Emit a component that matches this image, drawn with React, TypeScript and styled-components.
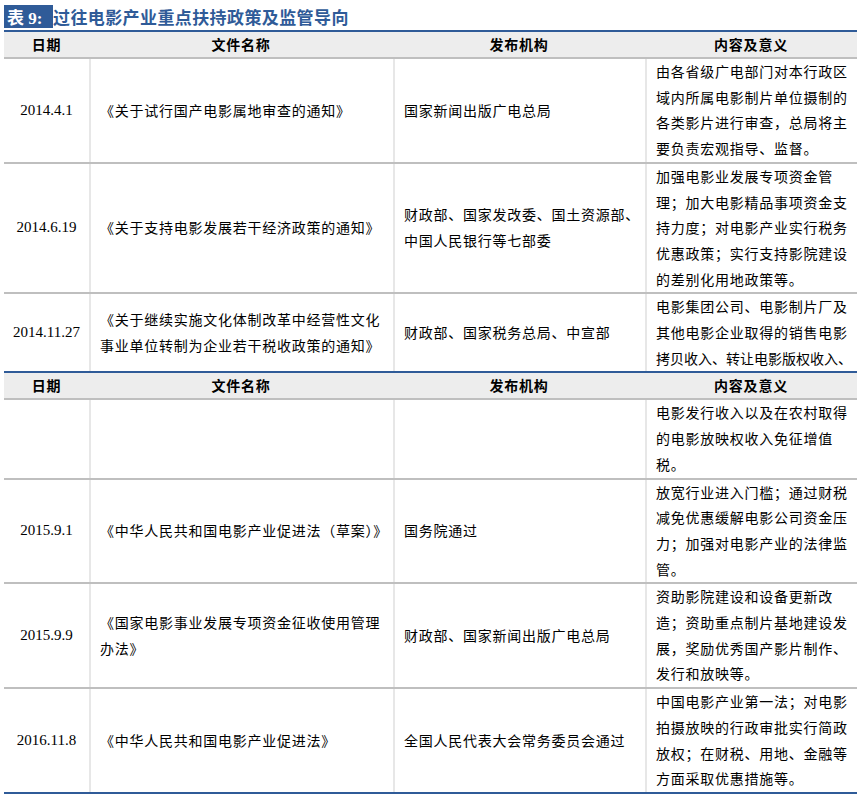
import React from "react";
import styled, { createGlobalStyle } from "styled-components";

const Global = createGlobalStyle`
  html, body { margin: 0; padding: 0; background: #ffffff; }
  body { font-family: "Noto Sans CJK SC", sans-serif; color: #000; }
`;

const BLUE = "#2f5b98";

const Page = styled.div`
  width: 861px;
  padding: 5px 4px 0 4px;
  box-sizing: border-box;
`;

const TitleBar = styled.div`
  display: flex;
  align-items: center;
  height: 23px;
  margin-bottom: 2px;
`;

const TitleLabel = styled.span`
  display: flex;
  align-items: center;
  height: 23px;
  width: 49px;
  box-sizing: border-box;
  padding-left: 3px;
  background: ${BLUE};
  color: #fff;
  font-family: "Liberation Serif", "Noto Sans CJK SC", serif;
  font-weight: 700;
  font-size: 17px;
  white-space: pre;
`;

const TitleText = styled.span`
  color: ${BLUE};
  font-family: "Noto Sans CJK SC", sans-serif;
  font-weight: 700;
  font-size: 17px;
  letter-spacing: 0.4px;
  line-height: 23px;
`;

const Section = styled.div<{ $closed?: boolean }>`
  border-top: 2px solid ${BLUE};
  border-bottom: ${(p) => (p.$closed ? `2px solid ${BLUE}` : "none")};
  width: 853px;
`;

const Row = styled.div<{ $last?: boolean }>`
  display: grid;
  grid-template-columns: 85px 304px 252px 212px;
  border-bottom: ${(p) => (p.$last ? "none" : "2px solid #bfbfbf")};
`;

const HeadRow = styled(Row)`
  background: #ededed;
  height: 25px;
  box-sizing: content-box;
`;

const HeadCell = styled.div`
  display: flex;
  align-items: center;
  justify-content: center;
  font-weight: 700;
  font-size: 14px;
  letter-spacing: 0.8px;
  line-height: 25px;
`;

const Cell = styled.div<{ $divider?: boolean; $top?: boolean; $center?: boolean }>`
  display: flex;
  flex-direction: column;
  justify-content: ${(p) => (p.$top ? "flex-start" : "center")};
  align-items: ${(p) => (p.$center ? "center" : "flex-start")};
  border-left: ${(p) => (p.$divider ? "2px solid #e7e7e7" : "none")};
  padding: 0 0 0 ${(p) => (p.$center ? "0" : "9px")};
  box-sizing: border-box;
  font-size: 14px;
  letter-spacing: 0.75px;
  line-height: 25.7px;
`;

const DateText = styled.span`
  font-family: "Liberation Serif", serif;
  font-size: 15px;
  letter-spacing: 0;
`;

const Line = styled.span<{ $tight?: boolean }>`
  display: block;
  white-space: nowrap;
  letter-spacing: ${(p) => (p.$tight ? "0px" : "0.75px")};
`;

type Item = {
  date: string;
  name: string[];
  org: string[];
  content: string[];
  tightLast?: boolean;
};

const part1: Item[] = [
  {
    date: "2014.4.1",
    name: ["《关于试行国产电影属地审查的通知》"],
    org: ["国家新闻出版广电总局"],
    content: [
      "由各省级广电部门对本行政区",
      "域内所属电影制片单位摄制的",
      "各类影片进行审查，总局将主",
      "要负责宏观指导、监督。",
    ],
  },
  {
    date: "2014.6.19",
    name: ["《关于支持电影发展若干经济政策的通知》"],
    org: ["财政部、国家发改委、国土资源部、", "中国人民银行等七部委"],
    content: [
      "加强电影业发展专项资金管",
      "理；加大电影精品事项资金支",
      "持力度；对电影产业实行税务",
      "优惠政策；实行支持影院建设",
      "的差别化用地政策等。",
    ],
  },
  {
    date: "2014.11.27",
    name: ["《关于继续实施文化体制改革中经营性文化", "事业单位转制为企业若干税收政策的通知》"],
    org: ["财政部、国家税务总局、中宣部"],
    content: [
      "电影集团公司、电影制片厂及",
      "其他电影企业取得的销售电影",
      "拷贝收入、转让电影版权收入、",
    ],
    tightLast: true,
  },
];

const part2: Item[] = [
  {
    date: "",
    name: [],
    org: [],
    content: ["电影发行收入以及在农村取得", "的电影放映权收入免征增值", "税。"],
  },
  {
    date: "2015.9.1",
    name: ["《中华人民共和国电影产业促进法（草案）》"],
    org: ["国务院通过"],
    content: [
      "放宽行业进入门槛；通过财税",
      "减免优惠缓解电影公司资金压",
      "力；加强对电影产业的法律监",
      "管。",
    ],
  },
  {
    date: "2015.9.9",
    name: ["《国家电影事业发展专项资金征收使用管理", "办法》"],
    org: ["财政部、国家新闻出版广电总局"],
    content: [
      "资助影院建设和设备更新改",
      "造；资助重点制片基地建设发",
      "展，奖励优秀国产影片制作、",
      "发行和放映等。",
    ],
  },
  {
    date: "2016.11.8",
    name: ["《中华人民共和国电影产业促进法》"],
    org: ["全国人民代表大会常务委员会通过"],
    content: [
      "中国电影产业第一法；对电影",
      "拍摄放映的行政审批实行简政",
      "放权；在财税、用地、金融等",
      "方面采取优惠措施等。",
    ],
  },
];

const Header = () => (
  <HeadRow>
    <HeadCell>日期</HeadCell>
    <HeadCell>文件名称</HeadCell>
    <HeadCell>发布机构</HeadCell>
    <HeadCell>内容及意义</HeadCell>
  </HeadRow>
);

const DataRow = ({ item, last }: { item: Item; last?: boolean }) => (
  <Row $last={last}>
    <Cell $center>
      <DateText>{item.date}</DateText>
    </Cell>
    <Cell $divider>
      {item.name.map((l) => (
        <Line key={l}>{l}</Line>
      ))}
    </Cell>
    <Cell $divider>
      {item.org.map((l) => (
        <Line key={l}>{l}</Line>
      ))}
    </Cell>
    <Cell $divider $top>
      {item.content.map((l, i) => (
        <Line key={l} $tight={item.tightLast && i === item.content.length - 1}>
          {l}
        </Line>
      ))}
    </Cell>
  </Row>
);

export default function App() {
  return (
    <Page>
      <Global />
      <TitleBar>
        <TitleLabel>表 9:</TitleLabel>
        <TitleText>过往电影产业重点扶持政策及监管导向</TitleText>
      </TitleBar>
      <Section>
        <Header />
        {part1.map((it, i) => (
          <DataRow key={it.date} item={it} last={i === part1.length - 1} />
        ))}
      </Section>
      <Section $closed>
        <Header />
        {part2.map((it, i) => (
          <DataRow key={it.date || "cont"} item={it} last={i === part2.length - 1} />
        ))}
      </Section>
    </Page>
  );
}
